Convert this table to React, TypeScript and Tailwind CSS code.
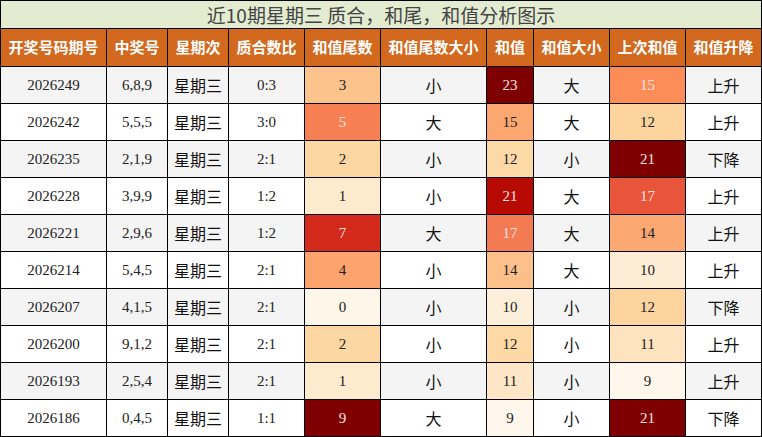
const HEADERS = [
  "开奖号码期号",
  "中奖号",
  "星期次",
  "质合数比",
  "和值尾数",
  "和值尾数大小",
  "和值",
  "和值大小",
  "上次和值",
  "和值升降",
];

// grid columns, each width includes the cell's right border
const COLS = "grid grid-cols-[106px_61px_61px_76px_76px_106px_47px_76px_76px_76px]";

// [bg, light text?]
type Heat = [string, boolean];

interface Row {
  issue: string;
  nums:  string;
  ratio: string;
  tail:  [string, Heat];
  tailSize: string;
  sum:   [string, Heat];
  sumSize: string;
  prev:  [string, Heat];
  trend: string;
}

const ROWS: Row[] = [
  { issue: "2026249", nums: "6,8,9", ratio: "0:3", tail: ["3", ["#fdc38d", false]], tailSize: "小", sum: ["23", ["#7f0000", true]],  sumSize: "大", prev: ["15", ["#fc8d59", true]],  trend: "上升" },
  { issue: "2026242", nums: "5,5,5", ratio: "3:0", tail: ["5", ["#f67f53", true]],  tailSize: "大", sum: ["15", ["#fca76f", false]], sumSize: "大", prev: ["12", ["#fdd49e", false]], trend: "上升" },
  { issue: "2026235", nums: "2,1,9", ratio: "2:1", tail: ["2", ["#fdd7a1", false]], tailSize: "小", sum: ["12", ["#fdd9a6", false]], sumSize: "小", prev: ["21", ["#7f0000", true]],  trend: "下降" },
  { issue: "2026228", nums: "3,9,9", ratio: "1:2", tail: ["1", ["#feeacd", false]], tailSize: "小", sum: ["21", ["#b60a03", true]],  sumSize: "大", prev: ["17", ["#e8553b", true]],  trend: "上升" },
  { issue: "2026221", nums: "2,9,6", ratio: "1:2", tail: ["7", ["#d42a1c", true]],  tailSize: "大", sum: ["17", ["#f47a54", true]],  sumSize: "大", prev: ["14", ["#fca872", false]], trend: "上升" },
  { issue: "2026214", nums: "5,4,5", ratio: "2:1", tail: ["4", ["#fca36e", false]], tailSize: "小", sum: ["14", ["#fdc08a", false]], sumSize: "大", prev: ["10", ["#feedd6", false]], trend: "上升" },
  { issue: "2026207", nums: "4,1,5", ratio: "2:1", tail: ["0", ["#fff6ea", false]], tailSize: "小", sum: ["10", ["#feefdb", false]], sumSize: "小", prev: ["12", ["#fdd49e", false]], trend: "下降" },
  { issue: "2026200", nums: "9,1,2", ratio: "2:1", tail: ["2", ["#fdd7a1", false]], tailSize: "小", sum: ["12", ["#fdd9a6", false]], sumSize: "小", prev: ["11", ["#fee3c1", false]], trend: "上升" },
  { issue: "2026193", nums: "2,5,4", ratio: "2:1", tail: ["1", ["#feeacd", false]], tailSize: "小", sum: ["11", ["#fee6c6", false]], sumSize: "小", prev: ["9",  ["#fff7ec", false]], trend: "上升" },
  { issue: "2026186", nums: "0,4,5", ratio: "1:1", tail: ["9", ["#7f0000", true]],  tailSize: "大", sum: ["9",  ["#fff7ec", false]], sumSize: "小", prev: ["21", ["#7f0000", true]],  trend: "下降" },
];

const cell = "flex items-center justify-center border-r border-b border-black";
const num  = `${cell} text-[15px] text-[#222]`;
const cjk  = `${cell} text-[16px] text-[#111] font-['Noto_Sans_CJK_SC',sans-serif]`;

function HeatCell({ value, heat }: { value: string; heat: Heat }) {
  const [bg, light] = heat;
  return (
    <div
      className={`${cell} text-[15px] ${light ? "text-[#f3e4e0]" : "text-[#222]"}`}
      style={{ backgroundColor: bg }}
    >
      {value}
    </div>
  );
}

export default function App() {
  return (
    <div className="w-[762px] h-[437px] bg-white overflow-hidden border-l border-t border-black font-['Liberation_Serif','Noto_Sans_CJK_SC',serif]">
      {/* Title */}
      <div className="h-[28px] flex items-center justify-center border-r border-b border-black bg-[#e3ecd1] text-[#444] text-[19px] font-['Noto_Sans_CJK_SC',sans-serif] leading-none">
        近10期星期三 质合，和尾，和值分析图示
      </div>

      {/* Header */}
      <div className={`${COLS} h-[38px] bg-[#d2691e]`}>
        {HEADERS.map((h) => (
          <div
            key={h}
            className={`${cell} text-white text-[15px] font-bold font-['Noto_Sans_CJK_SC',sans-serif] whitespace-nowrap`}
          >
            {h}
          </div>
        ))}
      </div>

      {/* Rows */}
      {ROWS.map((r, i) => (
        <div key={r.issue} className={`${COLS} h-[37px] ${i % 2 === 0 ? "bg-[#f4f4f4]" : "bg-white"}`}>
          <div className={num}>{r.issue}</div>
          <div className={num}>{r.nums}</div>
          <div className={cjk}>星期三</div>
          <div className={num}>{r.ratio}</div>
          <HeatCell value={r.tail[0]} heat={r.tail[1]} />
          <div className={cjk}>{r.tailSize}</div>
          <HeatCell value={r.sum[0]} heat={r.sum[1]} />
          <div className={cjk}>{r.sumSize}</div>
          <HeatCell value={r.prev[0]} heat={r.prev[1]} />
          <div className={cjk}>{r.trend}</div>
        </div>
      ))}
    </div>
  );
}
